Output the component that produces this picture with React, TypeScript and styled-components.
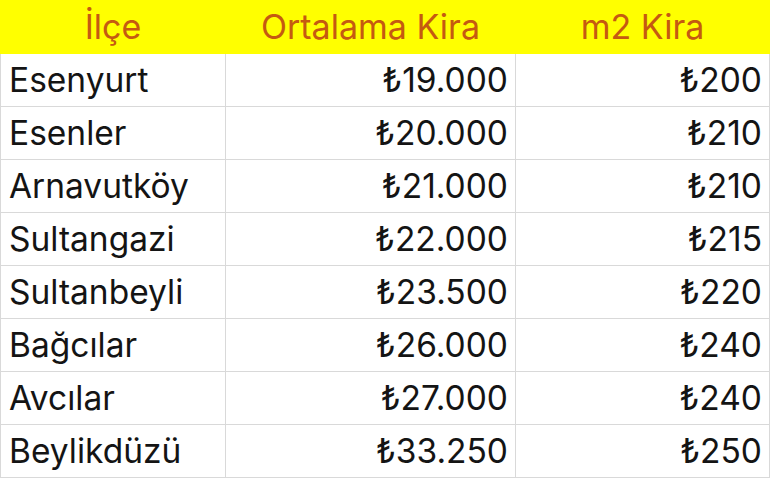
import React from "react";
import styled, { createGlobalStyle } from "styled-components";

const GlobalStyle = createGlobalStyle`
  html, body {
    margin: 0;
    padding: 0;
    background: #ffffff;
  }
  *, *::before, *::after {
    box-sizing: border-box;
  }
`;

const Sheet = styled.table`
  border-collapse: collapse;
  table-layout: fixed;
  width: 769px;
  font-family: Inter, "Liberation Sans", "DejaVu Sans", sans-serif;
`;

const HeadRow = styled.tr`
  height: 53px;
  background: #ffff00;
`;

const HeadCell = styled.th<{ $width: number }>`
  width: ${(p) => p.$width}px;
  padding: 0 4px 2px;
  font-size: 34px;
  font-weight: 400;
  color: #c55a11;
  text-align: center;
  border: 1px solid #ffff00;
  white-space: nowrap;
`;

const Row = styled.tr`
  height: 53px;
`;

const Cell = styled.td<{ $align?: "left" | "right" }>`
  padding: 0 7px 0 8px;
  font-size: 33.5px;
  color: #141414;
  text-align: ${(p) => p.$align ?? "left"};
  border: 1px solid #d9d9d9;
  white-space: nowrap;
  overflow: hidden;
`;

const rows = [
  { district: "Esenyurt", avg: "₺19.000", m2: "₺200" },
  { district: "Esenler", avg: "₺20.000", m2: "₺210" },
  { district: "Arnavutköy", avg: "₺21.000", m2: "₺210" },
  { district: "Sultangazi", avg: "₺22.000", m2: "₺215" },
  { district: "Sultanbeyli", avg: "₺23.500", m2: "₺220" },
  { district: "Bağcılar", avg: "₺26.000", m2: "₺240" },
  { district: "Avcılar", avg: "₺27.000", m2: "₺240" },
  { district: "Beylikdüzü", avg: "₺33.250", m2: "₺250" },
];

export default function App() {
  return (
    <>
      <GlobalStyle />
      <Sheet>
        <thead>
          <HeadRow>
            <HeadCell $width={225}>İlçe</HeadCell>
            <HeadCell $width={290}>Ortalama Kira</HeadCell>
            <HeadCell $width={254}>m2 Kira</HeadCell>
          </HeadRow>
        </thead>
        <tbody>
          {rows.map((r) => (
            <Row key={r.district}>
              <Cell>{r.district}</Cell>
              <Cell $align="right">{r.avg}</Cell>
              <Cell $align="right">{r.m2}</Cell>
            </Row>
          ))}
        </tbody>
      </Sheet>
    </>
  );
}
